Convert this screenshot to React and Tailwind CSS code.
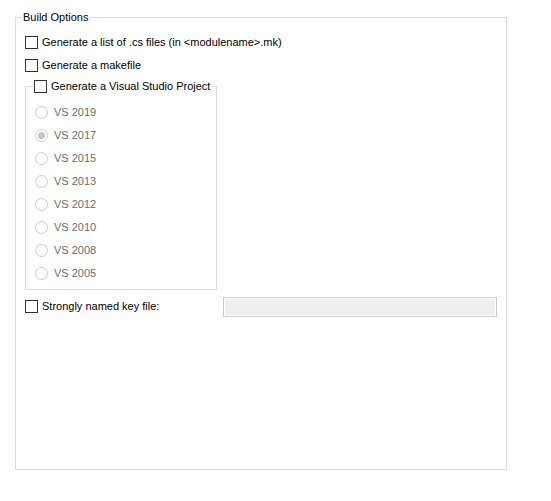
import React from 'react'

const versions = [
  { label: 'VS 2019', checked: false },
  { label: 'VS 2017', checked: true },
  { label: 'VS 2015', checked: false },
  { label: 'VS 2013', checked: false },
  { label: 'VS 2012', checked: false },
  { label: 'VS 2010', checked: false },
  { label: 'VS 2008', checked: false },
  { label: 'VS 2005', checked: false },
]

const Check = () => (
  <span className="block w-[13px] h-[13px] border border-[#333333] bg-white shrink-0" />
)

const Radio = ({ checked }) => (
  <span className="flex items-center justify-center w-[13px] h-[13px] rounded-full border border-[#cccccc] bg-white shrink-0">
    {checked && <span className="block w-[7px] h-[7px] rounded-full bg-[#c4c4c4]" />}
  </span>
)

const CheckRow = ({ label }) => (
  <div className="flex items-center h-[23px] gap-[4px]">
    <Check />
    <span>{label}</span>
  </div>
)

export default function App() {
  return (
    <div
      className="w-[551px] h-[501px] bg-white text-[11px] leading-[15px] text-black pl-[15px] pt-[10px]"
      style={{ fontFamily: '"Liberation Sans", Arial, sans-serif' }}
    >
      <fieldset className="w-[476px] h-[460px] border border-[#dcdcdc] px-[9px] pt-[6px]">
        <legend className="ml-[-3px] px-[1px] h-[15px] whitespace-nowrap">Build Options</legend>

        <CheckRow label="Generate a list of .cs files (in <modulename>.mk)" />
        <CheckRow label="Generate a makefile" />

        <fieldset className="mt-[2px] w-[192px] border border-[#dcdcdc] pl-[9px] pt-[7px] pb-[4px]">
          <legend className="ml-[-1px] pr-[2px] h-[15px] flex items-center gap-[4px] whitespace-nowrap">
            <Check />
            <span>Generate a Visual Studio Project</span>
          </legend>
          {versions.map((v) => (
            <div key={v.label} className="flex items-center h-[23px] gap-[6px] text-[#6d6d6d]">
              <Radio checked={v.checked} />
              <span>{v.label}</span>
            </div>
          ))}
        </fieldset>

        <div className="flex items-center h-[23px] mt-[5px]">
          <div className="flex items-center gap-[4px] w-[198px]">
            <Check />
            <span>Strongly named key file:</span>
          </div>
          <div className="w-[274px] h-[20px] border border-[#cccccc] p-[1px] bg-white">
            <div className="w-full h-full bg-[#efefef]" />
          </div>
        </div>
      </fieldset>
    </div>
  )
}
